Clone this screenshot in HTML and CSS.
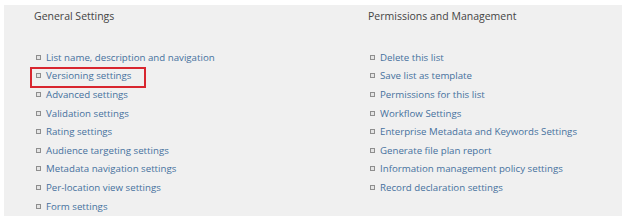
FILE: index.html
```html
<!DOCTYPE html>
<html>
<head>
<meta charset="utf-8">
<link rel="stylesheet" href="styles.css">
</head>
<body>
<div class="panel">
  <div class="col col-left">
    <h2 class="heading">General Settings</h2>
    <ul class="links">
      <li><a href="#">List name, description and navigation</a></li>
      <li class="highlight"><a href="#">Versioning settings</a></li>
      <li><a href="#">Advanced settings</a></li>
      <li><a href="#">Validation settings</a></li>
      <li><a href="#">Rating settings</a></li>
      <li><a href="#">Audience targeting settings</a></li>
      <li><a href="#">Metadata navigation settings</a></li>
      <li><a href="#">Per-location view settings</a></li>
      <li><a href="#">Form settings</a></li>
    </ul>
  </div>
  <div class="col col-right">
    <h2 class="heading">Permissions and Management</h2>
    <ul class="links">
      <li><a href="#">Delete this list</a></li>
      <li><a href="#">Save list as template</a></li>
      <li><a href="#">Permissions for this list</a></li>
      <li><a href="#">Workflow Settings</a></li>
      <li><a href="#">Enterprise Metadata and Keywords Settings</a></li>
      <li><a href="#">Generate file plan report</a></li>
      <li><a href="#">Information management policy settings</a></li>
      <li><a href="#">Record declaration settings</a></li>
    </ul>
  </div>
</div>
</body>
</html>
```
FILE: styles.css
```css
html, body {
  margin: 0;
  padding: 0;
  background: #ffffff;
}
body {
  font-family: "Open Sans", "DejaVu Sans", sans-serif;
}
.panel {
  margin: 5px 5px 0 4px;
  width: 618px;
  height: 211px;
  box-sizing: border-box;
  background: #f0f0f0;
  display: grid;
  grid-template-columns: 364px 1fr;
  padding-top: 3px;
}
.col-left {
  padding-left: 30px;
}
.col-right {
  padding-left: 0;
}
.heading {
  margin: 0;
  font-size: 10.5px;
  font-weight: normal;
  line-height: 16px;
  color: #444444;
}
.links {
  list-style: none;
  margin: 24px 0 0 2px;
  padding: 0;
}
.links li {
  display: flex;
  align-items: center;
  height: 18.6px;
  font-size: 9.7px;
}
.links li::before {
  content: "";
  width: 3px;
  height: 3px;
  border: 1px solid #8e8e8e;
  background: #e4e4e4;
  margin-right: 5px;
  flex: none;
}
.links a {
  color: #46709e;
  text-decoration: none;
  white-space: nowrap;
}
.highlight {
  position: relative;
}
.highlight::after {
  content: "";
  position: absolute;
  left: -6px;
  top: 0;
  width: 116px;
  height: 21px;
  box-sizing: border-box;
  border: 2px solid #d8262f;
}
```
